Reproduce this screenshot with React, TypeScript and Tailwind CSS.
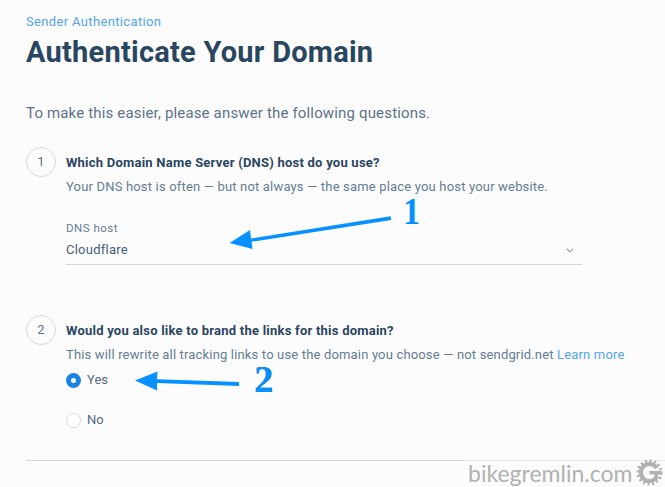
import type { ReactNode } from "react";

function Step({
	number,
	title,
	children,
}: {
	number: number;
	title: ReactNode;
	children: ReactNode;
}) {
	return (
		<section className="flex">
			<div className="flex h-[30px] w-[30px] shrink-0 items-center justify-center rounded-full border border-[#d5d8e2] text-[13px] text-[#5b728a]">
				{number}
			</div>
			<div className="ml-[10px] min-w-0 flex-1 whitespace-nowrap pt-[6px]">
				<h2 className="text-[13px] font-bold leading-5 tracking-[0.23px] text-[#294661]">
					{title}
				</h2>
				{children}
			</div>
		</section>
	);
}

function RadioOption({ label, checked }: { label: string; checked?: boolean }) {
	return (
		<label className="flex h-5 items-center gap-[6px] text-[13px] text-[#546b81]">
			<span
				className={
					checked
						? "h-[15px] w-[15px] rounded-full border-[5px] border-[#1a82e2] bg-white"
						: "h-[15px] w-[15px] rounded-full border border-[#d5d8e2] bg-white"
				}
			/>
			{label}
		</label>
	);
}

function Gear() {
	return (
		<svg className="mb-[2px] shrink-0" width="27" height="27" viewBox="0 0 27 27" fill="none" stroke="#b1b1b1">
			<circle cx="13.5" cy="13.5" r="11.6" strokeWidth="3" pathLength="32" strokeDasharray="0.9 1.1" />
			<path d="M20.800 9A8.600 8.600 0 1 0 20.800 18" strokeWidth="4.2" />
			<path d="M13.500 13.700H26M21 13.500 19.500 19" strokeWidth="3.6" />
		</svg>
	);
}

// Numbered arrows laid over the form
function Annotations() {
	return (
		<div className="pointer-events-none absolute inset-0 font-['Liberation_Serif',serif] text-[#0790ff]">
			<svg className="absolute inset-0" width="665" height="487" viewBox="0 0 665 487" fill="#0790ff">
				<path d="M229.500 243 250 230 251 238.500 390.600 216.200 391.200 220 251.500 241.800 252.600 249Z" />
				<path d="M135 380.500 157.500 371.500 157 379.200 239 382 239 386 157 383 157 390.500Z" />
			</svg>
			<span className="absolute left-[402px] top-[198px] scale-x-90 text-[38px] font-bold leading-[26px]">1</span>
			<span className="absolute left-[254px] top-[366px] text-[38px] font-bold leading-[26px] [text-shadow:0.5px_0_0_#2a6ba8]">2</span>
		</div>
	);
}

export default function App() {
	return (
		<div className="relative h-[487px] w-[665px] overflow-hidden bg-[#fcfcfc] font-['Roboto',sans-serif]">
			<main className="px-[26px] pt-[12px]">
				<a className="block text-[13px] leading-5 tracking-[0.35px] text-[#53a5ee]">
					Sender Authentication
				</a>
				<h1 className="text-[29px] font-bold leading-10 tracking-[0.24px] text-[#294661]">
					Authenticate Your Domain
				</h1>
				<p className="mt-[31px] text-[15px] leading-5 tracking-[0.16px] text-[#5b728a]">
					To make this easier, please answer the following questions.
				</p>

				<div className="mt-6 h-[168px]">
					<Step number={1} title="Which Domain Name Server (DNS) host do you use?">
						<p className="mt-1 text-[13px] leading-5 tracking-[0.175px] text-[#647c94]">
							Your DNS host is often — but not always — the same place you host your website.
						</p>
						<div className="mt-[21px] h-[47px] w-[516px] border-b border-[#d2d5de]">
							<div className="text-[11.5px] leading-5 tracking-[0.5px] text-[#647c94]">DNS host</div>
							<div className="mt-[2px] flex items-center justify-between pr-[8px] text-[13px] leading-5 tracking-[0.25px] text-[#456078]">
								Cloudflare
								<svg width="8" height="5" viewBox="0 0 8 5" fill="none" stroke="#8aa0ae" strokeWidth="1.2">
									<path d="m1 .8 3 3 3-3" />
								</svg>
							</div>
						</div>
					</Step>
				</div>

				<Step number={2} title="Would you also like to brand the links for this domain?">
					<p className="mt-1 text-[13px] leading-5 tracking-[0.165px] text-[#647c94]">
						This will rewrite all tracking links to use the domain you choose — not sendgrid.net{" "}
						<a className="text-[#53a5ee]">Learn more</a>
					</p>
					<div className="mt-[5px] flex flex-col gap-5">
						<RadioOption label="Yes" checked />
						<RadioOption label="No" />
					</div>
				</Step>
			</main>
			<div className="ml-[26px] mt-[30px] h-px bg-[#d5d8e2]" />

			<Annotations />
			<div className="absolute bottom-0 right-0 flex h-[27px] w-[199px] items-center bg-[#fcfcfc]/40 pl-[2px] font-['Lato',sans-serif] text-[23px] leading-[27px] text-[#b1b1b1]">
				<span className="w-[168px] shrink-0">bikegremlin.com</span>
				<Gear />
			</div>
		</div>
	);
}
